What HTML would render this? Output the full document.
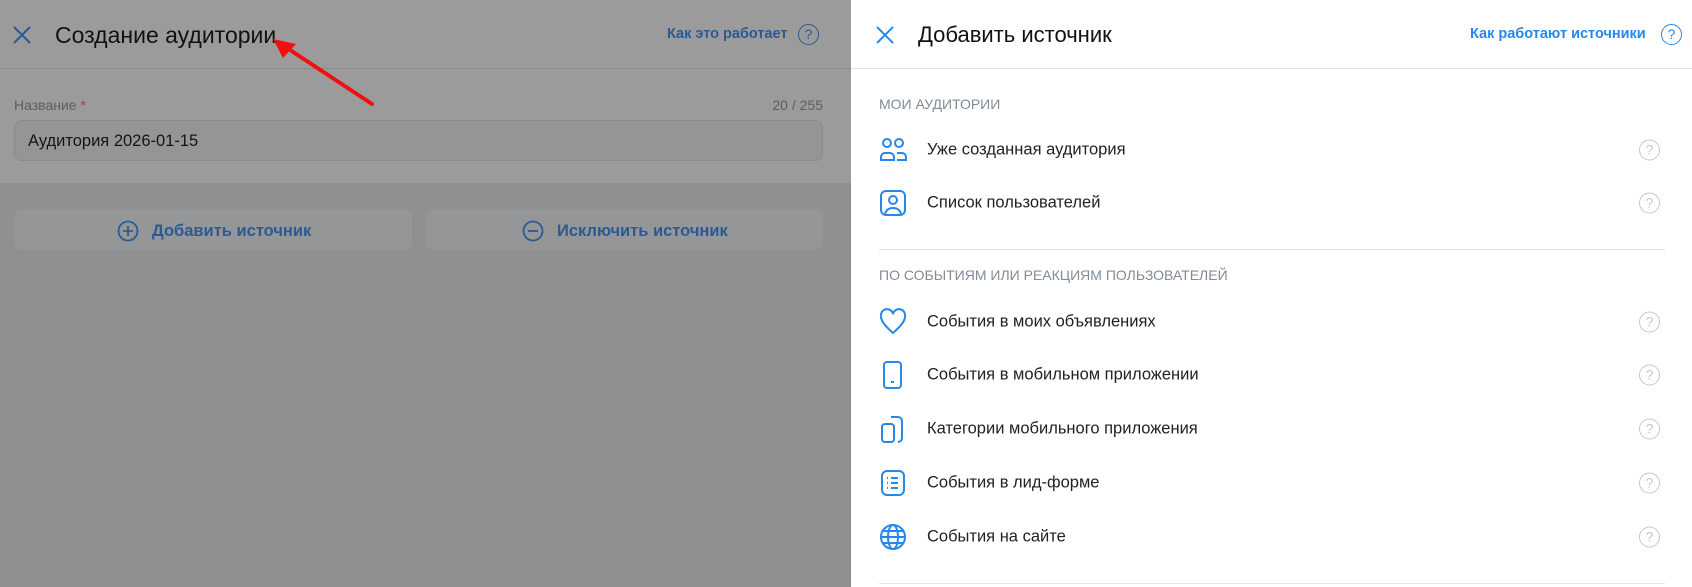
<!DOCTYPE html>
<html><head><meta charset="utf-8"><style>
*{margin:0;padding:0;box-sizing:border-box}
body{width:1692px;height:587px;overflow:hidden;font-family:"Liberation Sans",sans-serif;position:relative;background:#8f9092}
.abs{position:absolute}
.l-top{left:0;top:0;width:851px;height:183px;background:#9b9b9b}
.l-bot{left:0;top:183px;width:851px;height:404px;background:#8f9092}
.r{left:851px;top:0;width:841px;height:587px;background:#fff}
.item{position:absolute;left:927px;font-size:16.5px;color:#222;transform:translateY(-50%)}
.q{position:absolute;left:1639px;width:21px;height:21px;border:1.6px solid #c4c8cf;border-radius:50%;color:#c4c8cf;font-size:14px;text-align:center;line-height:18px;transform:translateY(-50%)}
.sec{position:absolute;left:879px;font-size:14px;color:#818c99;transform:translateY(-50%)}
.sep{position:absolute;left:879px;width:786px;height:1px;background:#e1e3e6}
.ic{position:absolute;left:879px;transform:translateY(-50%)}
</style></head><body>
<div class="abs l-top"></div>
<div class="abs l-bot"></div>
<div class="abs" style="left:0;top:68px;width:851px;height:1px;background:#8a8a8a"></div>
<svg class="abs" style="left:12px;top:25px" width="20" height="20" viewBox="0 0 20 20"><path d="M2 2L18 18M18 2L2 18" stroke="#2a5a94" stroke-width="2" fill="none"/></svg>
<div class="abs" style="left:55px;top:22px;font-size:23px;color:#111">Создание аудитории</div>
<div class="abs" style="left:667px;top:26px;font-size:14.5px;color:#2a5a94;font-weight:bold">Как это работает</div>
<div class="abs" style="left:798px;top:24px;width:21px;height:21px;border:1.8px solid #2a5a94;border-radius:50%;color:#2a5a94;font-size:14px;text-align:center;line-height:18px">?</div>
<div class="abs" style="left:14px;top:97px;font-size:14px;color:#5b5e62">Название <span style="color:#9a4040">*</span></div>
<div class="abs" style="right:869px;top:97px;font-size:14px;color:#5b5e62">20 / 255</div>
<div class="abs" style="left:14px;top:120px;width:809px;height:41px;border:1px solid #888a8d;border-radius:8px;background:#949597"></div>
<div class="abs" style="left:28px;top:132px;font-size:16.5px;color:#151515">Аудитория 2026-01-15</div>
<div class="abs" style="left:14px;top:209px;width:398px;height:41px;border-radius:8px;background:#959698"></div>
<div class="abs" style="left:426px;top:209px;width:397px;height:41px;border-radius:8px;background:#959698"></div>
<svg class="abs" style="left:117px;top:220px" width="22" height="22" viewBox="0 0 22 22"><circle cx="11" cy="11" r="9.5" stroke="#2a5a94" stroke-width="1.8" fill="none"/><path d="M11 6v10M6 11h10" stroke="#2a5a94" stroke-width="1.8"/></svg>
<div class="abs" style="left:152px;top:222px;font-size:16.5px;font-weight:bold;color:#2a5a94">Добавить источник</div>
<svg class="abs" style="left:522px;top:220px" width="22" height="22" viewBox="0 0 22 22"><circle cx="11" cy="11" r="9.5" stroke="#2a5a94" stroke-width="1.8" fill="none"/><path d="M6 11h10" stroke="#2a5a94" stroke-width="1.8"/></svg>
<div class="abs" style="left:557px;top:222px;font-size:16.5px;font-weight:bold;color:#2a5a94">Исключить источник</div>
<svg class="abs" style="left:270px;top:36px" width="110" height="72" viewBox="0 0 110 72"><path d="M102 68L14 10" stroke="#f01010" stroke-width="4" stroke-linecap="round"/><path d="M3 3L26 8L13 22Z" fill="#f01010"/></svg>

<div class="abs r"></div>
<svg class="abs" style="left:875px;top:25px" width="20" height="20" viewBox="0 0 20 20"><path d="M2 2L18 18M18 2L2 18" stroke="#2688eb" stroke-width="2" fill="none"/></svg>
<div class="abs" style="left:918px;top:22px;font-size:22px;color:#111">Добавить источник</div>
<div class="abs" style="left:1470px;top:26px;font-size:14.5px;color:#2688eb;font-weight:bold">Как работают источники</div>
<div class="abs" style="left:1661px;top:24px;width:21px;height:21px;border:1.8px solid #2688eb;border-radius:50%;color:#2688eb;font-size:14px;text-align:center;line-height:18px">?</div>
<div class="abs" style="left:851px;top:68px;width:841px;height:1px;background:#e1e3e6"></div>

<div class="sec" style="top:104px">МОИ АУДИТОРИИ</div>
<svg class="ic" style="top:150px" width="30" height="24" viewBox="0 0 30 24" fill="none" stroke="#2688eb" stroke-width="2"><circle cx="8" cy="5" r="4"/><circle cx="20" cy="5" r="4"/><path d="M2 22v-3a4 4 0 0 1 4-4h5a4 4 0 0 1 4 4v3zM18 15h5a4 4 0 0 1 4 4v3h-9"/></svg>
<div class="item" style="top:150px">Уже созданная аудитория</div><div class="q" style="top:150px">?</div>
<svg class="ic" style="top:203px" width="28" height="28" viewBox="0 0 28 28" fill="none" stroke="#2688eb" stroke-width="2"><rect x="2" y="2" width="24" height="24" rx="5"/><circle cx="14" cy="11" r="4"/><path d="M6 25c1-4 4-6 8-6s7 2 8 6"/></svg>
<div class="item" style="top:203px">Список пользователей</div><div class="q" style="top:203px">?</div>
<div class="sep" style="top:249px"></div>
<div class="sec" style="top:275px">ПО СОБЫТИЯМ ИЛИ РЕАКЦИЯМ ПОЛЬЗОВАТЕЛЕЙ</div>
<svg class="ic" style="top:322px" width="28" height="28" viewBox="0 0 28 28" fill="none" stroke="#2688eb" stroke-width="2"><path d="M14 25C6 18 2 13 2 8.5A6 6 0 0 1 14 6a6 6 0 0 1 12 2.5C26 13 22 18 14 25z"/></svg>
<div class="item" style="top:322px">События в моих объявлениях</div><div class="q" style="top:322px">?</div>
<svg class="ic" style="top:375px" width="28" height="30" viewBox="0 0 28 30" fill="none" stroke="#2688eb" stroke-width="2"><rect x="5" y="2" width="17" height="26" rx="3"/><path d="M12 22h3"/></svg>
<div class="item" style="top:375px">События в мобильном приложении</div><div class="q" style="top:375px">?</div>
<svg class="ic" style="top:429px" width="28" height="30" viewBox="0 0 28 30" fill="none" stroke="#2688eb" stroke-width="2"><rect x="3" y="10" width="12" height="18" rx="3"/><path d="M12 3h7a4 4 0 0 1 4 4v17a4 4 0 0 1-4 4"/></svg>
<div class="item" style="top:429px">Категории мобильного приложения</div><div class="q" style="top:429px">?</div>
<svg class="ic" style="top:483px" width="28" height="28" viewBox="0 0 28 28" fill="none" stroke="#2688eb" stroke-width="2"><rect x="3" y="2" width="22" height="24" rx="5"/><path d="M12 9h7M12 14h7M12 19h7M8 9h1M8 14h1M8 19h1"/></svg>
<div class="item" style="top:483px">События в лид-форме</div><div class="q" style="top:483px">?</div>
<svg class="ic" style="top:537px" width="28" height="28" viewBox="0 0 28 28" fill="none" stroke="#2688eb" stroke-width="2"><circle cx="14" cy="14" r="12"/><ellipse cx="14" cy="14" rx="5" ry="12"/><path d="M2 14h24M4 8h20M4 20h20"/></svg>
<div class="item" style="top:537px">События на сайте</div><div class="q" style="top:537px">?</div>
<div class="sep" style="top:583px"></div>
</body></html>
